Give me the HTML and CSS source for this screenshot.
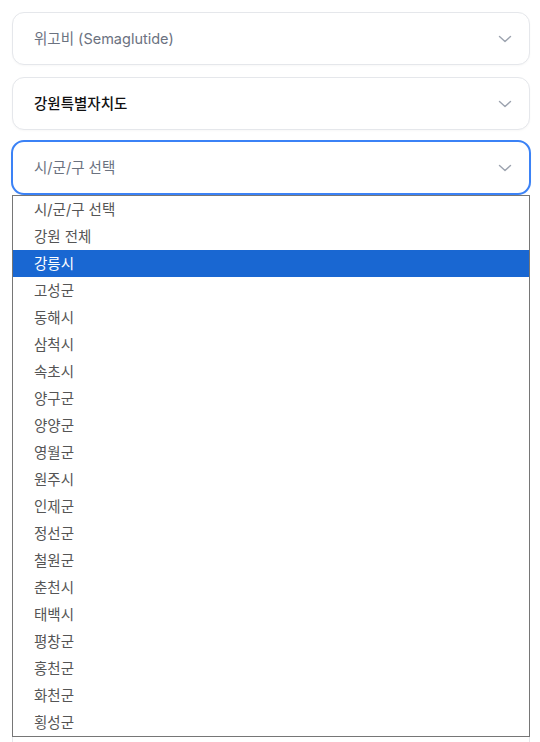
FILE: index.html
```html
<!DOCTYPE html>
<html lang="ko">
<head>
<meta charset="utf-8">
<link rel="stylesheet" href="styles.css">
</head>
<body>
<div class="page">
  <div class="select">
    <span class="value placeholder">위고비 (Semaglutide)</span>
    <svg class="chev" width="14" height="8" viewBox="0 0 14 8"><path d="M1.5 1.5 L7 6.5 L12.5 1.5" fill="none" stroke="#9ca3af" stroke-width="1.4" stroke-linecap="round" stroke-linejoin="round"/></svg>
  </div>
  <div class="select">
    <span class="value chosen">강원특별자치도</span>
    <svg class="chev" width="14" height="8" viewBox="0 0 14 8"><path d="M1.5 1.5 L7 6.5 L12.5 1.5" fill="none" stroke="#9ca3af" stroke-width="1.4" stroke-linecap="round" stroke-linejoin="round"/></svg>
  </div>
  <div class="select-wrap">
    <div class="select focused">
      <span class="value placeholder">시/군/구 선택</span>
      <svg class="chev" width="14" height="8" viewBox="0 0 14 8"><path d="M1.5 1.5 L7 6.5 L12.5 1.5" fill="none" stroke="#9ca3af" stroke-width="1.4" stroke-linecap="round" stroke-linejoin="round"/></svg>
    </div>
    <ul class="listbox">
      <li>시/군/구 선택</li>
      <li>강원 전체</li>
      <li class="active">강릉시</li>
      <li>고성군</li>
      <li>동해시</li>
      <li>삼척시</li>
      <li>속초시</li>
      <li>양구군</li>
      <li>양양군</li>
      <li>영월군</li>
      <li>원주시</li>
      <li>인제군</li>
      <li>정선군</li>
      <li>철원군</li>
      <li>춘천시</li>
      <li>태백시</li>
      <li>평창군</li>
      <li>홍천군</li>
      <li>화천군</li>
      <li>횡성군</li>
    </ul>
  </div>
  <div class="card">
    <div class="spacer"></div>
    <div class="badge"></div>
  </div>
</div>
</body>
</html>
```
FILE: styles.css
```css
* { box-sizing: border-box; }
html, body { margin: 0; padding: 0; background: #ffffff; }
body {
  font-family: Inter, "Noto Sans CJK KR", "Noto Sans", sans-serif;
  font-size: 14.5px;
  overflow: hidden;
  height: 742px;
}
.page {
  padding: 12px 10px 0 12px;
  display: flex;
  flex-direction: column;
  gap: 12px;
}
.select {
  height: 53px;
  border: 1px solid #e5e7eb;
  border-radius: 12px;
  background: #fff;
  display: flex;
  align-items: center;
  justify-content: space-between;
  padding: 0 17px 0 21px;
  box-shadow: 0 1px 2px rgba(0,0,0,0.03);
}
.value { line-height: 20px; }
.placeholder { color: #6b7280; }
.chosen { color: #111111; font-weight: 500; }
.chev { display: block; }
.select-wrap { position: relative; }
.select.focused {
  border: 2px solid #3b82f6;
  margin: -2px -1px 0 -1px;
  height: 55px;
  padding: 0 17px 0 21px;
  border-radius: 13px;
}
.listbox {
  position: absolute;
  left: 0;
  top: 53px;
  width: 518px;
  margin: 0;
  padding: 0;
  list-style: none;
  background: #fff;
  border: 1px solid #767676;
  z-index: 10;
}
.listbox li {
  height: 27px;
  line-height: 27px;
  padding-left: 21px;
  color: #555555;
}
.listbox li.active {
  background: #1967d2;
  color: #ffffff;
}
.card {
  border: 1px solid #e5e7eb;
  border-radius: 12px;
  padding: 0 22px;
  height: 700px;
}
.spacer { height: 534px; }
.badge {
  width: 42px;
  height: 30px;
  border-radius: 10px;
  background: #fdecec;
}
```
